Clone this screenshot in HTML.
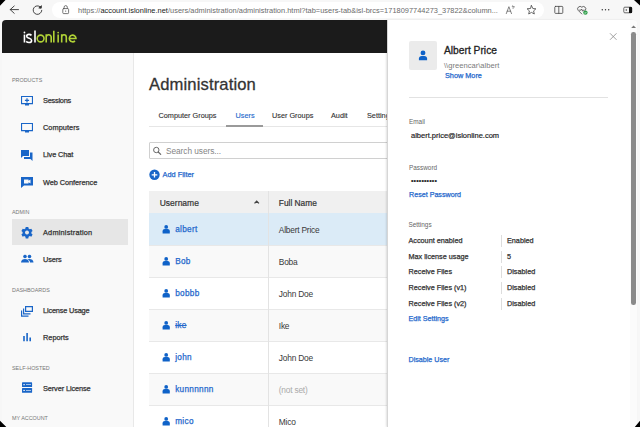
<!DOCTYPE html>
<html><head><meta charset="utf-8">
<style>
*{box-sizing:border-box;margin:0;padding:0}
html,body{width:640px;height:427px;overflow:hidden;background:#f7f7f7;font-family:"Liberation Sans",sans-serif}
.a{position:absolute}
svg.a{overflow:visible}
.t{position:absolute;white-space:nowrap;line-height:10px;height:10px}
.sb{-webkit-text-stroke:0.2px currentColor}
.side{color:#333;font-size:7.35px;letter-spacing:-0.1px;-webkit-text-stroke:0.25px #333}
.lbl{color:#777;font-size:5.4px}
.tab{color:#333;font-size:7.3px;-webkit-text-stroke:0.12px #333}
.lnk{color:#2468cc;font-size:8.2px;letter-spacing:0.32px;-webkit-text-stroke:0.25px #2468cc}
.cell{color:#3a3a3a;font-size:8.4px;letter-spacing:-0.22px}
.dl{color:#666;font-size:6.4px}
.dv{color:#222;font-size:7.5px;-webkit-text-stroke:0.18px #222}
.sk{color:#333;font-size:7.25px;-webkit-text-stroke:0.25px #333}
.dlnk{color:#2468cc;font-size:7.15px;-webkit-text-stroke:0.25px #2468cc}
.row{position:absolute;left:149px;width:470px;height:32px;border-top:1px solid #e8e8e8}
</style></head><body>
  <!-- window corners -->
  <svg class="a" style="left:0;top:0;z-index:50" width="640" height="427">
    <path d="M0 0H5.5L0 5.8Z M634 0H640V5.5Z M0 420.8V427H6.3Z M640 420.8V427H634.8Z" fill="#000"/>
  </svg>
  <!-- toolbar -->
  <svg class="a" style="left:0;top:0" width="640" height="20">
    <g fill="none" stroke="#333" stroke-width="0.9" stroke-linecap="round" stroke-linejoin="round">
      <path d="M10.2 9.6H18.5M14.2 6L10.2 9.6L14.2 13.3"/>
      <path d="M41.8 10.3A4.3 4.3 0 1 1 40.4 6.9"/><path d="M41.4 6.1L41.2 8.2L39.2 8Z" fill="#333"/>
    </g>
  </svg>
  <div class="a" style="left:52px;top:2px;width:492px;height:16px;background:#fff;border-radius:8px"></div>
  <svg class="a" style="left:0;top:0" width="640" height="20">
    <g fill="none" stroke="#555" stroke-width="0.8" stroke-linecap="round" stroke-linejoin="round">
      <rect x="62.8" y="8.6" width="5.8" height="5" rx="0.8"/>
      <path d="M64.1 8.6V7.2a1.6 1.6 0 0 1 3.2 0V8.6"/>
    </g>
    <circle cx="65.7" cy="11.1" r="0.6" fill="#555"/>
    <g fill="none" stroke="#444" stroke-width="0.8" stroke-linecap="round" stroke-linejoin="round">
      <path d="M506.3 13.6L508.9 6.7L511.5 13.6M507.2 11.2H510.6" stroke="#666"/><path d="M512.6 5.6L513 7.2M512.2 6.6H514.3M513.8 6.3C514.6 7.4 514 8.6 512.8 8.4" stroke="#777" stroke-width="0.6"/>
      <path d="M531.5 5.6L532.8 8.5L535.9 8.8L533.6 10.9L534.3 14L531.5 12.4L528.7 14L529.4 10.9L527.1 8.8L530.2 8.5Z"/>
      <rect x="554.8" y="6.4" width="8" height="7" rx="0.8"/>
      <path d="M558.8 6.4V13.4"/>
      <path d="M581.8 14L578.3 10.5A2.4 2.4 0 0 1 581.8 7.2A2.4 2.4 0 0 1 585.5 10.2M579.5 10.2h1.3l.8-1.2l1 2.2l.7-1h1"/>
    </g>
    <circle cx="585.4" cy="12.6" r="2.2" fill="#2e9e49"/>
    <path d="M584.3 12.6l0.8 0.8l1.4-1.5" stroke="#fff" stroke-width="0.7" fill="none"/>
    <g fill="#333"><circle cx="602.3" cy="9.8" r="0.7"/><circle cx="605.5" cy="9.8" r="0.7"/><circle cx="608.7" cy="9.8" r="0.7"/></g>
    <rect x="623.8" y="7.2" width="8" height="5.6" rx="1" fill="none" stroke="#444" stroke-width="0.8"/>
    <rect x="629" y="7" width="3" height="6" rx="0.6" fill="#111"/>
    <circle cx="626.3" cy="10" r="0.8" fill="#444"/>
  </svg>
  <div class="t" style="left:78px;top:5.6px;font-size:7.41px;letter-spacing:0.02px;color:#6b6b6b">https://<span style="color:#1a1a1a">account.islonline.net</span>/users/administration/administration.html?tab=users-tab&amp;isl-brcs=1718097744273_37822&amp;column...</div>

  <!-- content -->
  <div class="a" style="left:2px;top:20px;width:635px;height:407px;background:#fff;border-radius:4px 4px 0 0;overflow:hidden">
    <div class="a" style="left:0;top:0;width:385px;height:32.5px;background:#1b1b1b"></div>
    <div class="a" style="left:0;top:32.5px;width:132px;height:380px;background:#f9f9f9;border-right:1px solid #e8e8e8"></div>
  </div>

  <!-- logo -->
  <svg class="a" style="left:0;top:0" width="100" height="60">
    <g fill="none" stroke="#fff" stroke-width="1.6" stroke-linecap="butt">
      <path d="M24.45 34.6V42.5"/>
      <path d="M31.5 35.4C30.9 34.8 30 34.4 29 34.4C27.6 34.4 26.7 35.2 26.7 36.3C26.7 38.9 31.6 37.7 31.6 40.4C31.6 41.7 30.6 42.5 29 42.5C27.9 42.5 26.9 42.1 26.2 41.4"/>
      <path d="M35 30.4V42.5"/>
    </g>
    <circle cx="24.45" cy="32.5" r="0.9" fill="#fff"/>
    <g fill="none" stroke="#b0d236" stroke-width="1.6">
      <circle cx="40.6" cy="38.5" r="3.4"/>
      <path d="M46.2 34.3V42.5M46.2 37.3A2.5 2.6 0 0 1 51.2 37.3V42.5"/>
      <path d="M53.8 30.7V42.5"/>
      <path d="M58.15 34.6V42.5"/>
      <path d="M61.7 34.3V42.5M61.7 37.3A2.3 2.6 0 0 1 66.3 37.3V42.5"/>
      <path d="M69.5 38.5H76A3.35 3.35 0 1 0 75 40.9"/>
    </g>
    <circle cx="58.15" cy="32.6" r="0.9" fill="#b0d236"/>
  </svg>

  <!-- sidebar -->
  <div class="t lbl" style="left:12px;top:75.0px">PRODUCTS</div>
  <div class="t side" style="left:43px;top:96.3px;letter-spacing:-0.225px">Sessions</div>
  <div class="t side" style="left:43px;top:123.2px;letter-spacing:0.054px">Computers</div>
  <div class="t side" style="left:43px;top:150px;letter-spacing:-0.081px">Live Chat</div>
  <div class="t side" style="left:43px;top:177.5px;letter-spacing:-0.056px">Web Conference</div>
  <div class="t lbl" style="left:12px;top:206.5px">ADMIN</div>
  <div class="a" style="left:12px;top:219px;width:115.5px;height:26.3px;background:#e6e6e6"></div>
  <div class="t side" style="left:43px;top:228px;letter-spacing:0.197px">Administration</div>
  <div class="t side" style="left:43px;top:255px;letter-spacing:-0.097px">Users</div>
  <div class="t lbl" style="left:12px;top:285.0px">DASHBOARDS</div>
  <div class="t side" style="left:43px;top:306px;letter-spacing:-0.168px">License Usage</div>
  <div class="t side" style="left:43px;top:333.3px;letter-spacing:0.012px">Reports</div>
  <div class="t lbl" style="left:12px;top:362.5px">SELF-HOSTED</div>
  <div class="t side" style="left:43px;top:384px;letter-spacing:-0.107px">Server License</div>
  <div class="t lbl" style="left:12px;top:413.0px">MY ACCOUNT</div>

  <svg class="a" style="left:0;top:0" width="140" height="427">
    <g fill="#1a66c8">
      <!-- sessions -->
      <path d="M21 96h12v8.2h-4v1.4h-4v-1.4H21zM22.1 97.1v6h9.8v-6z" fill-rule="evenodd"/>
      <path d="M26.4 98.3h1.2v1.5h1.5v1.2h-1.5v1.5h-1.2v-1.5h-1.5v-1.2h1.5z"/>
      <!-- computers -->
      <path d="M21 123h12v8.2h-4v1.4h-4v-1.4H21zM22.1 124.1v6h9.8v-6z" fill-rule="evenodd"/>
      <!-- live chat -->
      <path d="M21 150h8v6h-6l-2 2z"/>
      <path d="M30 152.5h2.5v8.5l-2-2h-6.5v-2h6z"/>
      <!-- web conf -->
      <path d="M21 177h12v8.5H24l-3 2.5zM24 179.5v4h4.5v-1.3l2 1.3v-4l-2 1.3v-1.3z" fill-rule="evenodd"/>
      <!-- gear -->
      <path d="M25.7 227h2.6l.3 1.6 1.2.7 1.5-.6 1.3 2.2-1.2 1.1v1.4l1.2 1.1-1.3 2.2-1.5-.6-1.2.7-.3 1.6h-2.6l-.3-1.6-1.2-.7-1.5.6-1.3-2.2 1.2-1.1v-1.4l-1.2-1.1 1.3-2.2 1.5.6 1.2-.7z M27 230.5a2 2 0 1 0 .01 0z" fill-rule="evenodd"/>
      <!-- users -->
      <circle cx="25" cy="256.5" r="1.8"/><circle cx="29.5" cy="256.5" r="1.8"/>
      <path d="M21 262.5c0-2.5 2-3.5 4-3.5s4 1 4 3.5zM27.5 259.3c1-.3 1.5-.3 2-.3 2 0 4 1 4 3.5h-3.5c0-1.3-.7-2.4-2.5-3.2z"/>
      <!-- license usage -->
      <path d="M25 306h8v6h-8zM26.2 307.2v3.6h5.6v-3.6z" fill-rule="evenodd"/>
      <path d="M23 308.5h1.2v4.8h6.3v1.2H23z"/>
      <path d="M21 310.5h1.2v5h6.3v1.2H21z"/>
      <!-- reports -->
      <path d="M23.2 336h1.6v5.3h-1.6zM26.3 333h1.6v8.3h-1.6zM29.4 337.6h1.6v3.7h-1.6z"/>
      <!-- server -->
      <rect x="22" y="382.3" width="10.1" height="4.8" rx="0.6"/><rect x="22" y="388" width="10.1" height="4.8" rx="0.6"/>
    </g>
    <g fill="#fff"><rect x="23.3" y="384.2" width="1.6" height="1"/><rect x="23.3" y="389.9" width="1.6" height="1"/><rect x="26" y="384.4" width="5" height=".6"/><rect x="26" y="390.1" width="5" height=".6"/></g>
  </svg>

  <!-- main -->
  <div class="t" style="left:149px;top:77px;font-size:16.6px;line-height:16px;height:16px;color:#333;letter-spacing:0.13px;-webkit-text-stroke:0.3px #333">Administration</div>
  <div class="a" style="left:149px;top:126px;width:240px;height:1px;background:#e6e6e6"></div>
  <div class="a" style="left:226px;top:124.5px;width:37px;height:2px;background:#9a9a9a"></div>
  <div class="t tab" style="left:158.5px;top:110.5px">Computer Groups</div>
  <div class="t tab" style="left:235.5px;top:110.5px;color:#2468cc;-webkit-text-stroke-color:#2468cc">Users</div>
  <div class="t tab" style="left:272px;top:110.5px">User Groups</div>
  <div class="t tab" style="left:331px;top:110.5px">Audit</div>
  <div class="t tab" style="left:367px;top:110.5px">Settings</div>

  <div class="a" style="left:149px;top:142px;width:260px;height:17px;border:1px solid #d0d0d0;border-radius:1px;background:#fff"></div>
  <svg class="a" style="left:0;top:0" width="640" height="427">
    <circle cx="156.3" cy="150" r="2.7" fill="none" stroke="#6a6a6a" stroke-width="1"/>
    <path d="M158.3 152l2.4 2.4" stroke="#6a6a6a" stroke-width="1.2" stroke-linecap="round"/>
    <circle cx="154.5" cy="174.8" r="5.2" fill="#1a66c8"/>
    <path d="M154.5 172v5.6M151.7 174.8h5.6" stroke="#fff" stroke-width="1.3"/>
  </svg>
  <div class="t" style="left:166px;top:146.3px;font-size:8.3px;letter-spacing:-0.05px;color:#858585">Search users...</div>
  <div class="t dlnk" style="left:162.5px;top:170px;font-size:7.36px">Add Filter</div>

  <!-- table -->
  <div class="a" style="left:149px;top:191px;width:470px;height:22px;background:#f0f0f0"></div>
  <div class="t" style="left:159.7px;top:197.5px;font-size:8.5px;color:#333;-webkit-text-stroke:0.2px #333">Username</div>
  <div class="t" style="left:278.8px;top:197.5px;font-size:8.36px;color:#333;-webkit-text-stroke:0.2px #333">Full Name</div>
  <svg class="a" style="left:0;top:0" width="640" height="427">
    <path d="M254.5 203.4l2.2-2.2l2.2 2.2" fill="none" stroke="#444" stroke-width="1.3"/>
  </svg>

  <div class="row" style="top:213px;background:#dbebf7;border-top:0"></div>
  <div class="row" style="top:245px;background:#f9f9f9"></div>
  <div class="row" style="top:277px;background:#fff"></div>
  <div class="row" style="top:309px;background:#f9f9f9"></div>
  <div class="row" style="top:341px;background:#fff"></div>
  <div class="row" style="top:373px;background:#f9f9f9"></div>
  <div class="row" style="top:405px;background:#fff"></div>
  <div class="a" style="left:268px;top:191px;width:1px;height:236px;background:#e3e3e3"></div>

  <svg class="a" style="left:0;top:0" width="640" height="427">
    <defs><g id="usr"><circle cx="3.6" cy="1.9" r="1.9"/><path d="M0 8.6V6.3C0 4.8 1 4 2.2 4H5C6.2 4 7.2 4.8 7.2 6.3V8.6z"/></g></defs>
    <g fill="#0f62c8">
      <use href="#usr" x="162.6" y="225"/>
      <use href="#usr" x="162.6" y="257"/>
      <use href="#usr" x="162.6" y="289"/>
      <use href="#usr" x="162.6" y="321"/>
      <use href="#usr" x="162.6" y="353"/>
      <use href="#usr" x="162.6" y="385"/>
      <use href="#usr" x="162.6" y="417"/>
    </g>
  </svg>
  <div class="t lnk" style="left:175.2px;top:224.5px">albert</div>
  <div class="t lnk" style="left:175.2px;top:256.5px">Bob</div>
  <div class="t lnk" style="left:175.2px;top:288.5px">bobbb</div>
  <div class="t lnk" style="left:175.2px;top:320.5px;text-decoration:line-through;text-decoration-thickness:0.6px">ike</div>
  <div class="t lnk" style="left:175.2px;top:352.5px">john</div>
  <div class="t lnk" style="left:175.2px;top:384.5px">kunnnnnn</div>
  <div class="t lnk" style="left:175.2px;top:416.5px">mico</div>
  <div class="t cell" style="left:278.8px;top:225.1px">Albert Price</div>
  <div class="t cell" style="left:278.8px;top:257.1px">Boba</div>
  <div class="t cell" style="left:278.8px;top:289.1px">John Doe</div>
  <div class="t cell" style="left:278.8px;top:321.1px">Ike</div>
  <div class="t cell" style="left:278.8px;top:353.1px">John Doe</div>
  <div class="t cell" style="left:278.8px;top:385.1px;color:#aaa;-webkit-text-stroke:0">(not set)</div>
  <div class="t cell" style="left:278.8px;top:417.1px">Mico</div>

  <!-- drawer -->
  <div class="a" style="left:387px;top:20px;width:250px;height:407px;background:#fff;border-left:1px solid #d6d6d6;box-shadow:-1px 0 2px rgba(0,0,0,.12);border-top-right-radius:5px"></div>
  <div class="a" style="left:629.5px;top:20px;width:7.5px;height:407px;background:#fbfbfb;border-top-right-radius:5px"></div>
  <div class="a" style="left:631.2px;top:31.7px;width:4.6px;height:273.5px;background:#8a8a8a;border-radius:2.3px"></div>
  <svg class="a" style="left:0;top:0" width="640" height="427">
    <path d="M631.2 28h4.8l-2.4-2.6z" fill="#777"/>
    <path d="M610 33.3l6.5 6.5M616.5 33.3l-6.5 6.5" stroke="#8a8a8a" stroke-width="0.8"/>
  </svg>
  <div class="a" style="left:408.5px;top:41px;width:28.5px;height:29px;background:#ebebeb;border-radius:2px"></div>
  <svg class="a" style="left:0;top:0" width="640" height="427">
    <g fill="#0f62c8"><circle cx="423" cy="52.9" r="2.45"/><path d="M418.9 60.3V58.6C418.9 56.8 420.1 55.9 421.7 55.9H424.3C425.9 55.9 427.1 56.8 427.1 58.6V60.3z"/></g>
  </svg>
  <div class="t" style="left:444px;top:46.4px;font-size:10.25px;color:#222;-webkit-text-stroke:0.3px #222">Albert Price</div>
  <div class="t" style="left:444px;top:60.5px;font-size:7.6px;color:#7a7a7a">\\greencar\albert</div>
  <div class="t dlnk" style="left:445px;top:71.2px;font-size:7.3px">Show More</div>
  <div class="a" style="left:408.5px;top:97px;width:199px;height:1px;background:#e2e2e2"></div>

  <div class="t dl" style="left:409px;top:117px">Email</div>
  <div class="t dv" style="left:411px;top:130.5px">albert.price@islonline.com</div>
  <div class="t dl" style="left:409px;top:163px">Password</div>
  <div class="t dv" style="left:411px;top:176px;letter-spacing:0.15px;font-size:7px">••••••••••</div>
  <div class="t dlnk" style="left:409px;top:189.5px">Reset Password</div>

  <div class="t dl" style="left:408.5px;top:219.5px">Settings</div>
  <div class="t sk" style="left:408.5px;top:236px">Account enabled</div>
  <div class="t sk" style="left:408.5px;top:251.5px">Max license usage</div>
  <div class="t sk" style="left:408.5px;top:267px">Receive Files</div>
  <div class="t sk" style="left:408.5px;top:282.5px">Receive Files (v1)</div>
  <div class="t sk" style="left:408.5px;top:298.5px">Receive Files (v2)</div>
  <div class="t sk" style="left:507px;top:236px">Enabled</div>
  <div class="t sk" style="left:507px;top:251.5px">5</div>
  <div class="t sk" style="left:507px;top:267px">Disabled</div>
  <div class="t sk" style="left:507px;top:282.5px">Disabled</div>
  <div class="t sk" style="left:507px;top:298.5px">Disabled</div>
  <div class="a" style="left:501px;top:235px;width:1px;height:12px;background:#ddd"></div>
  <div class="a" style="left:501px;top:250.5px;width:1px;height:12px;background:#ddd"></div>
  <div class="a" style="left:501px;top:266px;width:1px;height:12px;background:#ddd"></div>
  <div class="a" style="left:501px;top:281.5px;width:1px;height:12px;background:#ddd"></div>
  <div class="a" style="left:501px;top:297.5px;width:1px;height:12px;background:#ddd"></div>
  <div class="t dlnk" style="left:408.5px;top:313.5px">Edit Settings</div>
  <div class="t dlnk" style="left:408.5px;top:354.5px">Disable User</div>
</body></html>
